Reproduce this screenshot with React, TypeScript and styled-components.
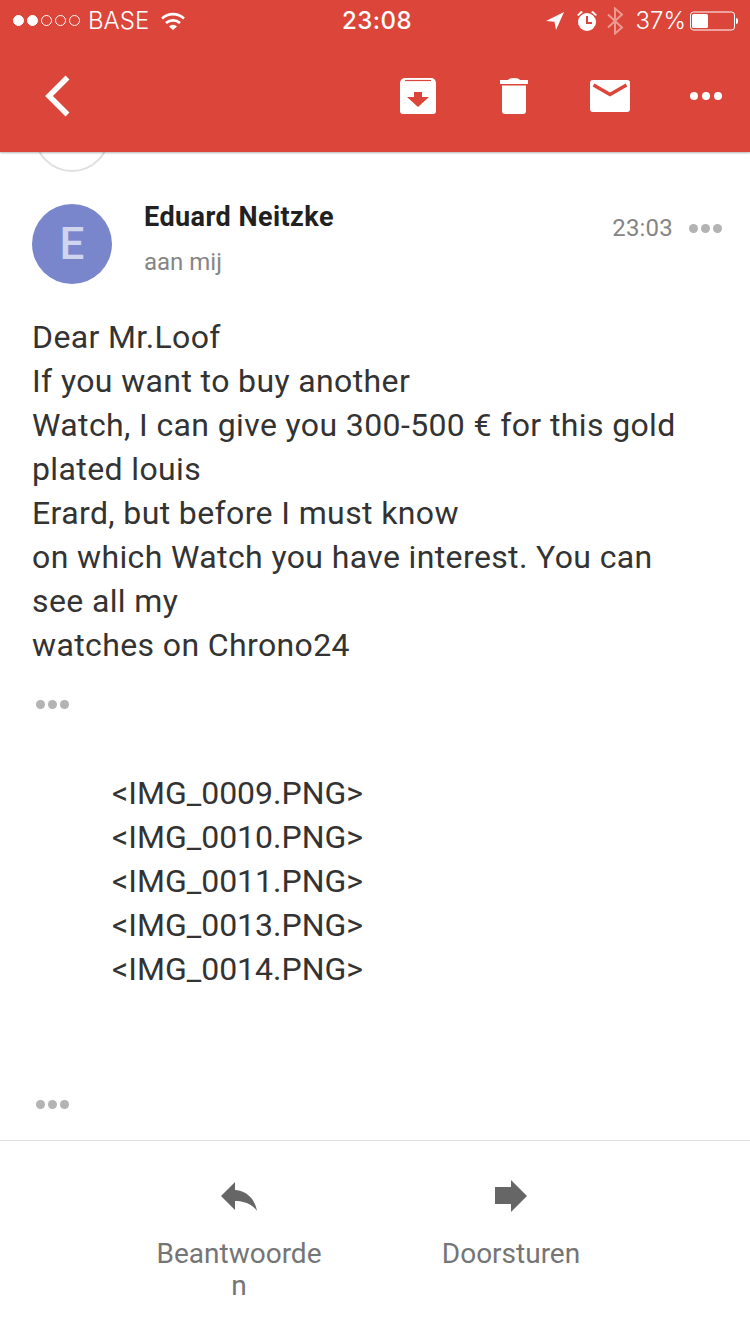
import React from 'react'
import styled, { createGlobalStyle } from 'styled-components'

const GlobalStyle = createGlobalStyle`
  html, body {
    margin: 0;
    padding: 0;
    background: #fff;
  }
  body {
    font-family: Roboto, "Liberation Sans", sans-serif;
  }
`

const Page = styled.div`
  width: 750px;
  height: 1334px;
  display: flex;
  flex-direction: column;
  overflow: hidden;
  background: #fff;
`

const Header = styled.header`
  position: relative;
  z-index: 2;
  flex: none;
  height: 152px;
  background: #dc4539;
  box-shadow: 0 1px 2px rgba(0, 0, 0, 0.3);
  color: #fff;
`

const StatusBar = styled.div`
  box-sizing: border-box;
  height: 40px;
  display: flex;
  align-items: center;
  justify-content: space-between;
  padding: 1px 12px 0 13px;
  font-family: Inter, "Liberation Sans", sans-serif;
  font-size: 24px;
  font-weight: 300;
`

const StatusSide = styled.div<{ $gap: number }>`
  flex: 1 1 0;
  display: flex;
  align-items: center;
  gap: ${({ $gap }) => $gap}px;
`

const StatusRight = styled(StatusSide)`
  justify-content: flex-end;
`

const Clock = styled.div`
  margin-left: 3px;
  font-weight: 500;
  font-size: 24px;
  letter-spacing: 0.5px;
`

const Signal = styled.div`
  display: flex;
  gap: 3px;
`

const Dot = styled.span<{ $on: boolean }>`
  box-sizing: border-box;
  width: 11px;
  height: 11px;
  border-radius: 50%;
  border: 1px solid #fff;
  background: ${({ $on }) => ($on ? '#fff' : 'transparent')};
`

const Glyph = styled.svg<{ $left?: number }>`
  flex: none;
  margin-left: ${({ $left }) => $left || 0}px;
`

const Percent = styled.span`
  margin-left: 4px;
`

const Toolbar = styled.div`
  height: 112px;
  display: flex;
  align-items: center;
  padding-left: 44px;
`

const ToolGroup = styled.div`
  margin: 0 -4px 0 auto;
  display: flex;
  align-items: center;
`

const ToolSlot = styled.div`
  width: 96px;
  display: flex;
  justify-content: center;
`

const Peek = styled.div`
  flex: none;
  height: 20px;
  padding-left: 34px;
  overflow: hidden;
`

const PeekCircle = styled.div`
  width: 76px;
  height: 76px;
  margin-top: -56px;
  box-sizing: border-box;
  border: 2px solid #e0e0e0;
  border-radius: 50%;
`

const Message = styled.main`
  flex: 1;
  padding: 32px 28px 0 32px;
`

const MessageHead = styled.div`
  display: flex;
  align-items: flex-start;
`

const Avatar = styled.div`
  flex: none;
  width: 80px;
  height: 80px;
  border-radius: 50%;
  background: #7986cb;
  color: #d0d4ed;
  font-size: 44px;
  font-weight: 500;
  line-height: 80px;
  text-align: center;
`

const Sender = styled.div`
  margin: -1px 0 0 32px;
  flex: 1;
`

const SenderName = styled.div`
  font-size: 27px;
  font-weight: 700;
  letter-spacing: 0.45px;
  line-height: 28px;
  color: #212121;
  margin-bottom: 17px;
`

const Recipient = styled.div`
  font-size: 24px;
  line-height: 28px;
  color: #858585;
`

const Meta = styled.div`
  display: flex;
  align-items: center;
  gap: 16px;
  height: 48px;
  font-size: 24px;
  letter-spacing: 0.2px;
  color: #858585;
`

const Ellipsis = styled.div`
  display: flex;
  gap: 3px;
  span {
    width: 9px;
    height: 9px;
    border-radius: 50%;
    background: #b3b3b3;
  }
`

const BodyText = styled.div`
  margin-top: 31px;
  padding-right: 20px;
  font-size: 32px;
  letter-spacing: 0.38px;
  line-height: 44px;
  color: #333;
`

const Trimmed = styled.div<{ $top: number }>`
  margin-top: ${({ $top }) => $top}px;
  margin-left: 4px;
`

const Attachments = styled.div`
  margin-top: 62px;
  padding-left: 80px;
  font-size: 32px;
  line-height: 44px;
  color: #333;
`

const ActionBar = styled.footer`
  flex: none;
  height: 194px;
  box-sizing: border-box;
  border-top: 1px solid #e2e2e2;
  display: flex;
  padding: 38px 0 0 154px;
  gap: 102px;
`

const Action = styled.div`
  width: 170px;
  display: flex;
  flex-direction: column;
  align-items: center;
  text-align: center;
  word-break: break-all;
  font-size: 28px;
  line-height: 32px;
  color: #757575;
`

const ActionIcon = styled.svg`
  width: 40px;
  height: 36px;
  margin-bottom: 23px;
  fill: #666;
`

const Dots = () => (
  <Ellipsis>
    <span />
    <span />
    <span />
  </Ellipsis>
)

const App: React.FC = () => (
  <Page>
    <GlobalStyle />
    <Header>
      <StatusBar>
        <StatusSide $gap={8}>
          <Signal>
            {[true, true, false, false, false].map((on, idx) => (
              <Dot key={idx} $on={on} />
            ))}
          </Signal>
          <span>BASE</span>
          <Glyph $left={3} width="26" height="20" viewBox="0 0 26 20" fill="none" stroke="#fff" strokeWidth="2.6">
            <path d="M2 7.5a16 16 0 0 1 22 0" />
            <path d="M6 12a10.5 10.5 0 0 1 14 0" />
            <path d="M13 19l-4-3.6a6 6 0 0 1 8 0z" fill="#fff" stroke="none" />
          </Glyph>
        </StatusSide>
        <Clock>23:08</Clock>
        <StatusRight $gap={8}>
          <Glyph width="20" height="20" viewBox="0 0 20 20" fill="#fff">
            <path d="M19 1L1 10l8.5.7L11 19z" />
          </Glyph>
          <Glyph $left={3} width="22" height="22" viewBox="0 0 22 22" fill="#fff">
            <circle cx="11" cy="12" r="9" />
            <path d="M1 5l4-4 2 1-4.500 4zM21 5l-4-4-2 1 4.500 4z" />
            <path d="M10 6h2v6h4v2h-6z" fill="#dc4539" />
          </Glyph>
          <Glyph width="18" height="28" viewBox="0 0 18 28" fill="none" stroke="rgba(255,255,255,0.45)" strokeWidth="2">
            <path d="M2 7.500l14 13-7 6V1.500l7 6-14 13" />
          </Glyph>
          <Percent>37%</Percent>
          <Glyph $left={-4} width="48" height="20" viewBox="0 0 48 20">
            <rect x="0.500" y="1" width="44" height="18" rx="3" fill="none" stroke="#fff" />
            <rect x="2" y="3" width="16" height="14" rx="1.500" fill="#fff" />
            <path d="M46 7a2 2 0 0 1 2 2v2a2 2 0 0 1-2 2z" fill="#fff" />
          </Glyph>
        </StatusRight>
      </StatusBar>
      <Toolbar>
        <svg width="26" height="42" viewBox="0 0 26 42" fill="none" stroke="#fff" strokeWidth="5.500">
          <path d="M23.500 2.500L5 21l18.500 18.500" />
        </svg>
        <ToolGroup>
          <ToolSlot>
            <svg width="36" height="36" viewBox="0 0 36 36">
              <path d="M5 0h26a5 5 0 0 1 5 5v28a3 3 0 0 1-3 3H3a3 3 0 0 1-3-3V5a5 5 0 0 1 5-5z" fill="#fff" />
              <path d="M5 2.500h26" stroke="#dc4539" strokeWidth="1.200" />
              <path d="M14 14h8v5h7L18 29 7 19h7z" fill="#dc4539" />
            </svg>
          </ToolSlot>
          <ToolSlot>
            <svg width="28" height="36" viewBox="0 0 28 36" fill="#fff">
              <path d="M0 2h8Q9 0 14 0t6 2h8v4H0z" />
              <path d="M2 7.500h24V33a3 3 0 0 1-3 3H5a3 3 0 0 1-3-3z" />
            </svg>
          </ToolSlot>
          <ToolSlot>
            <svg width="40" height="32" viewBox="0 0 40 32">
              <rect width="40" height="32" rx="3" fill="#fff" />
              <path d="M3.500 5l16.500 9.500L36.500 5" fill="none" stroke="#dc4539" strokeWidth="3.500" />
            </svg>
          </ToolSlot>
          <ToolSlot>
            <svg width="32" height="8" viewBox="0 0 32 8" fill="#fff">
              <circle cx="4" cy="4" r="4" />
              <circle cx="16" cy="4" r="4" />
              <circle cx="28" cy="4" r="4" />
            </svg>
          </ToolSlot>
        </ToolGroup>
      </Toolbar>
    </Header>
    <Peek>
      <PeekCircle />
    </Peek>
    <Message>
      <MessageHead>
        <Avatar>E</Avatar>
        <Sender>
          <SenderName>Eduard Neitzke</SenderName>
          <Recipient>aan mij</Recipient>
        </Sender>
        <Meta>
          <span>23:03</span>
          <Dots />
        </Meta>
      </MessageHead>
      <BodyText>
        Dear Mr.Loof
        <br />
        If you want to buy another
        <br />
        Watch, I can give you 300-500 € for this gold plated louis
        <br />
        Erard, but before I must know
        <br />
        on which Watch you have interest. You can see all my
        <br />
        watches on Chrono24
      </BodyText>
      <Trimmed $top={33}>
        <Dots />
      </Trimmed>
      <Attachments>
        {'<IMG_0009.PNG>'}
        <br />
        {'<IMG_0010.PNG>'}
        <br />
        {'<IMG_0011.PNG>'}
        <br />
        {'<IMG_0013.PNG>'}
        <br />
        {'<IMG_0014.PNG>'}
      </Attachments>
      <Trimmed $top={109}>
        <Dots />
      </Trimmed>
    </Message>
    <ActionBar>
      <Action>
        <ActionIcon viewBox="0 0 40 36">
          <path d="M16 3L2 17l14 14v-9c9 0 17 3 22 10C36 21 29 12 16 11z" />
        </ActionIcon>
        Beantwoorden
      </Action>
      <Action>
        <ActionIcon viewBox="0 0 40 36">
          <path d="M20 1l16 16-16 16v-8H4V8h16z" />
        </ActionIcon>
        Doorsturen
      </Action>
    </ActionBar>
  </Page>
)

export default App
